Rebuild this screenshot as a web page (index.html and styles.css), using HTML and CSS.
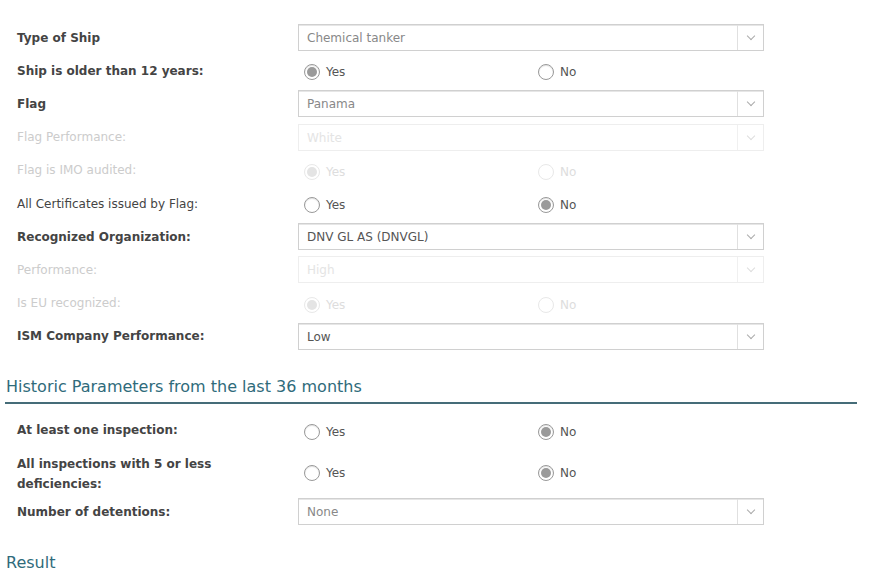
FILE: index.html
```html
<!DOCTYPE html>
<html lang="en">
<head>
    <meta charset="UTF-8">
    <title>Ship Risk Profile</title>
    <link rel="stylesheet" href="styles.css">
</head>
<body>
    <div class="page">
        <div class="form-rows">
            <div class="row">
                <div class="label strong">Type of Ship</div>
                <div class="select"><span class="value">Chemical tanker</span><span class="arrow"></span></div>
            </div>
            <div class="row">
                <div class="label strong">Ship is older than 12 years:</div>
                <div class="radios">
                    <label class="radio checked"><span class="dot"></span>Yes</label>
                    <label class="radio"><span class="dot"></span>No</label>
                </div>
            </div>
            <div class="row">
                <div class="label strong">Flag</div>
                <div class="select"><span class="value">Panama</span><span class="arrow"></span></div>
            </div>
            <div class="row disabled">
                <div class="label">Flag Performance:</div>
                <div class="select"><span class="value">White</span><span class="arrow"></span></div>
            </div>
            <div class="row disabled">
                <div class="label">Flag is IMO audited:</div>
                <div class="radios">
                    <label class="radio checked"><span class="dot"></span>Yes</label>
                    <label class="radio"><span class="dot"></span>No</label>
                </div>
            </div>
            <div class="row">
                <div class="label">All Certificates issued by Flag:</div>
                <div class="radios">
                    <label class="radio"><span class="dot"></span>Yes</label>
                    <label class="radio checked"><span class="dot"></span>No</label>
                </div>
            </div>
            <div class="row">
                <div class="label strong">Recognized Organization:</div>
                <div class="select dark"><span class="value">DNV GL AS (DNVGL)</span><span class="arrow"></span></div>
            </div>
            <div class="row disabled">
                <div class="label">Performance:</div>
                <div class="select"><span class="value">High</span><span class="arrow"></span></div>
            </div>
            <div class="row disabled">
                <div class="label">Is EU recognized:</div>
                <div class="radios">
                    <label class="radio checked"><span class="dot"></span>Yes</label>
                    <label class="radio"><span class="dot"></span>No</label>
                </div>
            </div>
            <div class="row">
                <div class="label strong">ISM Company Performance:</div>
                <div class="select dark"><span class="value">Low</span><span class="arrow"></span></div>
            </div>
        </div>

        <h2 class="section-title ruled">Historic Parameters from the last 36 months</h2>

        <div class="form-rows">
            <div class="row">
                <div class="label strong">At least one inspection:</div>
                <div class="radios">
                    <label class="radio"><span class="dot"></span>Yes</label>
                    <label class="radio checked"><span class="dot"></span>No</label>
                </div>
            </div>
            <div class="row tall">
                <div class="label strong">All inspections with 5 or less deficiencies:</div>
                <div class="radios">
                    <label class="radio"><span class="dot"></span>Yes</label>
                    <label class="radio checked"><span class="dot"></span>No</label>
                </div>
            </div>
            <div class="row">
                <div class="label strong">Number of detentions:</div>
                <div class="select"><span class="value">None</span><span class="arrow"></span></div>
            </div>
        </div>

        <h2 class="section-title result">Result</h2>
    </div>
</body>
</html>
```

FILE: styles.css
```css
* {
    margin: 0;
    padding: 0;
    box-sizing: border-box;
}

body {
    background: #fff;
    font-family: "DejaVu Sans", Verdana, sans-serif;
    color: #444;
}

.page {
    width: 875px;
    padding: 21px 18px 0 5px;
}

.form-rows {
    padding-left: 12px;
}

.row {
    display: grid;
    grid-template-columns: 281px 466px;
    align-items: center;
    height: 33.2px;
}

.row.tall {
    height: 48px;
}

.row.tall .label {
    padding-top: 5px;
}

.label {
    font-size: 12px;
    line-height: 20px;
    color: #444;
    padding-right: 70px;
}

.label.strong {
    font-weight: bold;
}

/* dropdowns */
.select {
    display: flex;
    height: 27px;
    border: 1px solid #d0d0d0;
    box-shadow: inset 0 1px 0 #e6e6e6;
    font-size: 12px;
    color: #888;
}

.select.dark {
    color: #555;
}

.select .value {
    flex: 1;
    padding: 1px 8px 0;
    line-height: 25px;
}

.select .arrow {
    width: 26px;
    border-left: 1px solid #e0e0e0;
    position: relative;
}

.select .arrow::after {
    content: "";
    position: absolute;
    left: 10px;
    top: 8px;
    width: 5px;
    height: 5px;
    border-right: 1px solid #aaa;
    border-bottom: 1px solid #aaa;
    transform: rotate(45deg);
}

/* radio buttons */
.radios {
    display: grid;
    grid-template-columns: 234px 1fr;
    padding-left: 6px;
    padding-top: 3px;
}

.radio {
    display: flex;
    align-items: center;
    gap: 6px;
    font-size: 12px;
    color: #555;
    line-height: 20px;
}

.radio .dot {
    width: 16px;
    height: 16px;
    border: 1px solid #999;
    border-radius: 50%;
    box-shadow: inset 0 1px 1px rgba(0, 0, 0, 0.12);
    position: relative;
}

.radio.checked .dot::after {
    content: "";
    position: absolute;
    left: 2px;
    top: 2px;
    width: 10px;
    height: 10px;
    border-radius: 50%;
    background: #9a9a9a;
}

/* disabled rows fade out */
.row.disabled .label {
    color: #ccc;
}

.row.disabled .select {
    border-color: #eee;
    box-shadow: none;
    color: #e4e4e4;
}

.row.disabled .select .arrow {
    border-left-color: #f0f0f0;
}

.row.disabled .select .arrow::after {
    border-color: #ddd;
}

.row.disabled .radio {
    color: #ddd;
}

.row.disabled .radio .dot {
    border-color: #e8e8e8;
    box-shadow: none;
}

.row.disabled .radio.checked .dot::after {
    background: #e4e4e4;
}

.section-title {
    font-size: 16px;
    font-weight: normal;
    color: #2f6b7b;
    padding-left: 1px;
    line-height: 20px;
}

.section-title.ruled {
    margin-top: 24px;
    padding-bottom: 5px;
    border-bottom: 2px solid #456c78;
    margin-bottom: 10px;
}

.section-title.result {
    margin-top: 25px;
}
```
